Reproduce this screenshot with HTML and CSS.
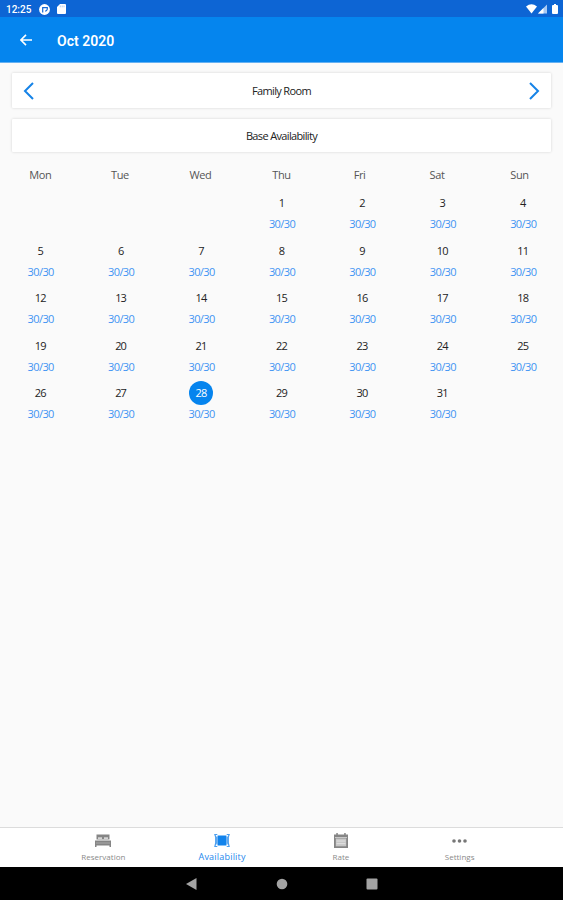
FILE: index.html
```html
<!DOCTYPE html>
<html lang="en">
<head>
    <meta charset="UTF-8">
    <meta name="viewport" content="width=device-width, initial-scale=1.0">
    <title>Availability</title>
    <link rel="stylesheet" href="styles.css">
</head>
<body>
    <div class="status-bar">
        <span class="clock">12:25</span>
        <svg class="status-app" width="11" height="11" viewBox="0 0 11 11">
            <circle cx="5.5" cy="5.5" r="5.4" fill="#fff"/>
            <path d="M3.7 8.6V3.7h4.6v1a2.3 2.3 0 0 1-2.3 2.3" fill="none" stroke="#1268d6" stroke-width="1.2"/>
        </svg>
        <svg class="status-card" width="9" height="10" viewBox="0 0 9 10">
            <path d="M3 0h5q1 0 1 1v8q0 1-1 1H1q-1 0-1-1V3z" fill="#fff"/>
            <path d="M3.3 1.5v1.8M5.2 1.5v1.8M7 1.5v1.8" stroke="#9fc3f1" stroke-width=".8"/>
        </svg>
        <div class="status-right">
            <svg width="11" height="10" viewBox="0 0 11 10"><path d="M0 2.4Q5.5-1.8 11 2.4L5.5 9.5z" fill="#fff"/></svg>
            <svg width="9" height="10" viewBox="0 0 9 10"><path d="M0 9.5L9 .5v9z" fill="#a9c9f3"/><path d="M0 9.5l5.5-5.5v5.5z" fill="#fff"/></svg>
            <svg class="battery" width="6" height="10" viewBox="0 0 6 10"><path d="M2 0h2v1h1q1 0 1 1v7q0 1-1 1H1q-1 0-1-1V2q0-1 1-1h1z" fill="#fff"/></svg>
        </div>
    </div>

    <header class="app-bar">
        <svg width="12" height="12" viewBox="0 0 12 12" fill="none" stroke="#fff" stroke-width="1.6"><path d="M12 6H1.2M6 .9L.9 6 6 11.1"/></svg>
        <h1>Oct 2020</h1>
    </header>

    <main>
        <div class="card room">
            <svg width="11" height="18" viewBox="0 0 11 18"><path d="M10 1L2 9l8 8"/></svg>
            <span>Family Room</span>
            <svg width="11" height="18" viewBox="0 0 11 18"><path d="M1 1l8 8-8 8"/></svg>
        </div>
        <div class="card base"><span>Base Availability</span></div>

        <div class="weekdays">
            <span>Mon</span>
            <span>Tue</span>
            <span>Wed</span>
            <span>Thu</span>
            <span>Fri</span>
            <span>Sat</span>
            <span>Sun</span>
        </div>
        <div class="calendar" id="calendar"></div>
    </main>

    <nav class="tabs">
        <div class="tab">
            <svg width="16" height="14" viewBox="0 0 16 14">
                <path d="M1.5 1h13v5h-13zM0 7h16v6.5h-1.5V12h-13v1.5H0z" fill="#858585"/>
                <path d="M3 3.7h4v2H3zM9 3.7h4v2H9z" fill="#d4d4d4"/>
                <path d="M1 9.5h14" stroke="#b9b9b9" stroke-width=".7"/>
            </svg>
            <span>Reservation</span>
        </div>
        <div class="tab active">
            <svg width="16" height="14" viewBox="0 0 16 14">
                <path d="M3.6 2h8.8v10H3.6z" fill="#1183ec"/>
                <path d="M3.3 1H.9l.8 2.5v6L.9 13h2.4M12.7 1h2.4l-.8 2.5v6l.8 3.5h-2.4M3 3v8M13 3v8" fill="none" stroke="#4a9eef" stroke-width="1.2"/>
            </svg>
            <span>Availability</span>
        </div>
        <div class="tab">
            <svg width="16" height="15" viewBox="0 0 16 15">
                <path d="M1 1.5h14V15H1zM3.3 0h1.5v2H3.3zM11.2 0h1.5v2h-1.5z" fill="#858585"/>
                <path d="M2.8 5.5h10.4v7.8H2.8z" fill="#c7c7c7"/>
                <path d="M2 4.6h12M3.5 8h9M3.5 10.7h9" stroke="#efefef" stroke-width=".7"/>
            </svg>
            <span>Rate</span>
        </div>
        <div class="tab">
            <svg width="16" height="14" viewBox="0 0 16 14" fill="#777"><circle cx="2" cy="7.5" r="1.8"/><circle cx="7.5" cy="7.5" r="1.8"/><circle cx="13" cy="7.5" r="1.8"/></svg>
            <span>Settings</span>
        </div>
    </nav>

    <footer class="system-nav">
        <svg width="12" height="12" viewBox="0 0 12 12"><path d="M10.5 0v12L0 6z"/></svg>
        <svg width="12" height="12" viewBox="0 0 12 12"><circle cx="6" cy="6" r="5.3"/></svg>
        <svg width="12" height="12" viewBox="0 0 12 12"><rect x=".5" y=".5" width="11" height="11" rx="1"/></svg>
    </footer>

    <script>
        const calendar = document.getElementById('calendar');
        const selectedDay = 28;

        for (let day = 1; day <= 31; day++) {
            const cell = document.createElement('div');
            cell.className = 'day';
            if (day === 1) cell.classList.add('first');
            if (day === selectedDay) cell.classList.add('selected');
            cell.innerHTML = '<span class="date">' + day + '</span><span class="rooms">30/30</span>';
            calendar.appendChild(cell);
        }
    </script>
</body>
</html>
```

FILE: styles.css
```css
* {
    box-sizing: border-box;
}
body {
    margin: 0;
    height: 100vh;
    display: flex;
    flex-direction: column;
    background: #fafafa;
    color: #333;
    font-family: "Open Sans", "Noto Sans", sans-serif;
    font-size: 11px;
    letter-spacing: -0.4px;
    overflow: hidden;
}
svg {
    display: block;
    flex: none;
}
.status-bar {
    height: 17px;
    padding: 1px 5px 0 6px;
    display: flex;
    align-items: center;
    background: #0d65d4;
    color: #fff;
}
.clock {
    width: 33px;
    font-family: Roboto, sans-serif;
    font-size: 10px;
    font-weight: 500;
    letter-spacing: 0;
}
.status-card {
    margin-left: 7px;
}
.status-right {
    margin-left: auto;
    display: flex;
    gap: 1px;
}
.battery {
    margin-left: 4px;
}
.app-bar {
    height: 46px;
    padding: 0 20px;
    display: flex;
    align-items: center;
    gap: 25px;
    background: #0585ee;
    border-bottom: 1px solid #65b1f2;
    color: #fff;
}
.app-bar h1 {
    margin: 2px 0 0;
    font-family: Roboto, sans-serif;
    font-size: 14px;
    font-weight: 600;
    letter-spacing: 0;
}
main {
    flex: 1;
    padding-top: 10px;
}
.card {
    height: 33px;
    margin: 0 12px 11px;
    display: flex;
    align-items: center;
    justify-content: center;
    background: #fff;
    border-radius: 1px;
    box-shadow: 0 0 3px rgba(0, 0, 0, 0.16);
    color: #222;
    font-weight: 500;
}
.card span {
    letter-spacing: -0.65px;
}
.room {
    height: 35px;
    padding: 0 11px;
    justify-content: space-between;
}
.room svg {
    fill: none;
    stroke: #1683e7;
    stroke-width: 2;
}
.weekdays {
    height: 23px;
    margin-top: 10px;
    display: grid;
    grid-template-columns: 80.5px 79px 82px 80px 76px 79px 86px;
    align-items: center;
    text-align: center;
    color: #555;
}
.calendar {
    padding-top: 5px;
    display: grid;
    grid-template-columns: repeat(7, 1fr);
    grid-auto-rows: 47.5px;
}
.first {
    grid-column: 4;
}
.day {
    display: flex;
    flex-direction: column;
    align-items: center;
}
.date {
    width: 24px;
    height: 24px;
    line-height: 24px;
    border-radius: 50%;
    text-align: center;
    letter-spacing: -0.8px;
    color: #222;
    font-weight: 500;
}
.selected .date {
    background: #0584ee;
    color: #fff;
}
.rooms {
    line-height: 18px;
    color: #3f94f3;
    letter-spacing: -0.6px;
    margin-right: -1px;
}
.tabs {
    height: 40px;
    padding: 5px 44px 0;
    display: flex;
    background: #fff;
    border-top: 1px solid #dcdcdc;
}
.tab {
    flex: 1;
    display: flex;
    flex-direction: column;
    align-items: center;
    color: #8a8a8a;
    font-family: "Open Sans", sans-serif;
    font-size: 8px;
    letter-spacing: 0;
}
.tab svg {
    height: 15px;
}
.tab span {
    margin-top: 2px;
    line-height: 13px;
}
.tab.active {
    color: #2587ec;
    font-size: 9px;
}
.tab.active span {
    letter-spacing: 0.2px;
}
.system-nav {
    height: 33px;
    display: flex;
    align-items: center;
    justify-content: center;
    gap: 78px;
    background: #000;
    fill: #a3a3a3;
}
```
